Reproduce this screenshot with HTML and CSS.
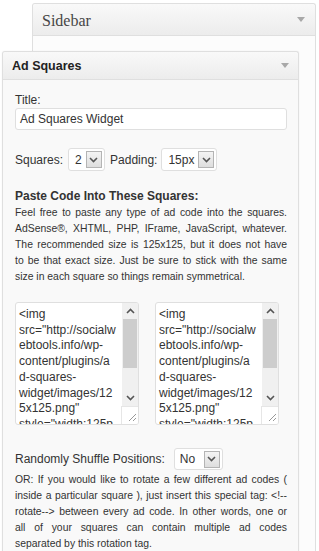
FILE: index.html
```html
<!DOCTYPE html>
<html>
<head>
<meta charset="utf-8">
<link rel="stylesheet" href="styles.css">
</head>
<body>
<div class="sidebar">
  <div class="sb-head"><span class="sb-title">Sidebar</span><span class="tri"></span></div>
  <div class="sb-body">
    <div class="widget">
      <div class="w-head"><span class="w-title">Ad Squares</span><span class="tri"></span></div>
      <div class="w-body">
        <div class="label">Title:</div>
        <div class="input">Ad Squares Widget</div>
        <div class="row row-sq">
          <span>Squares:</span>
          <span class="sel sel-2"><span class="sel-val">2</span><span class="sel-btn"><svg width="9" height="6" viewBox="0 0 9 6"><path d="M1 1 L4.5 4.5 L8 1" fill="none" stroke="#555" stroke-width="1.6"/></svg></span></span>
          <span class="pad-label">Padding:</span>
          <span class="sel sel-15"><span class="sel-val">15px</span><span class="sel-btn"><svg width="9" height="6" viewBox="0 0 9 6"><path d="M1 1 L4.5 4.5 L8 1" fill="none" stroke="#555" stroke-width="1.6"/></svg></span></span>
        </div>
        <div class="heading">Paste Code Into These Squares:</div>
        <div class="desc">
          <span class="jl">Feel free to paste any type of ad code into the squares.</span>
          <span class="jl">AdSense®, XHTML, PHP, IFrame, JavaScript, whatever.</span>
          <span class="jl">The recommended size is 125x125, but it does not have</span>
          <span class="jl">to be that exact size. Just be sure to stick with the same</span>
          <span class="ll">size in each square so things remain symmetrical.</span>
        </div>
        <div class="tas">
          <div class="ta">
            <div class="ta-text">&lt;img
src="http://socialw
ebtools.info/wp-
content/plugins/a
d-squares-
widget/images/12
5x125.png"
style="width:125p</div>
            <div class="ta-bar">
              <div class="sb-arrow"><svg width="9" height="6" viewBox="0 0 9 6"><path d="M1 5 L4.5 1.5 L8 5" fill="none" stroke="#555" stroke-width="1.6"/></svg></div>
              <div class="sb-thumb"></div>
              <div class="sb-track"></div>
              <div class="sb-arrow"><svg width="9" height="6" viewBox="0 0 9 6"><path d="M1 1 L4.5 4.5 L8 1" fill="none" stroke="#555" stroke-width="1.6"/></svg></div>
              <div class="sb-corner"><svg width="16" height="16" viewBox="0 0 16 16"><path d="M14 7 L7 14 M14 11 L11 14" stroke="#999" stroke-width="1"/></svg></div>
            </div>
          </div>
          <div class="ta">
            <div class="ta-text">&lt;img
src="http://socialw
ebtools.info/wp-
content/plugins/a
d-squares-
widget/images/12
5x125.png"
style="width:125p</div>
            <div class="ta-bar">
              <div class="sb-arrow"><svg width="9" height="6" viewBox="0 0 9 6"><path d="M1 5 L4.5 1.5 L8 5" fill="none" stroke="#555" stroke-width="1.6"/></svg></div>
              <div class="sb-thumb"></div>
              <div class="sb-track"></div>
              <div class="sb-arrow"><svg width="9" height="6" viewBox="0 0 9 6"><path d="M1 1 L4.5 4.5 L8 1" fill="none" stroke="#555" stroke-width="1.6"/></svg></div>
              <div class="sb-corner"><svg width="16" height="16" viewBox="0 0 16 16"><path d="M14 7 L7 14 M14 11 L11 14" stroke="#999" stroke-width="1"/></svg></div>
            </div>
          </div>
        </div>
        <div class="row row-shuffle">
          <span>Randomly Shuffle Positions:</span>
          <span class="sel sel-no"><span class="sel-val">No</span><span class="sel-btn"><svg width="9" height="6" viewBox="0 0 9 6"><path d="M1 1 L4.5 4.5 L8 1" fill="none" stroke="#555" stroke-width="1.6"/></svg></span></span>
        </div>
        <div class="desc desc-or">
          <span class="jl">OR: If you would like to rotate a few different ad codes (</span>
          <span class="jl">inside a particular square ), just insert this special tag: &lt;!--</span>
          <span class="jl">rotate--&gt; between every ad code. In other words, one or</span>
          <span class="jl">all of your squares can contain multiple ad codes</span>
          <span class="ll">separated by this rotation tag.</span>
        </div>
      </div>
    </div>
  </div>
</div>
</body>
</html>
```
FILE: styles.css
```css
html, body {
  margin: 0;
  padding: 0;
  background: #fff;
  height: 551px;
  overflow: hidden;
}
body {
  font-family: "Liberation Sans", Arial, sans-serif;
  color: #333;
  font-size: 12px;
}
.sidebar {
  margin: 3px 0 0 32px;
  width: 284px;
  box-sizing: border-box;
  border: 1px solid #dfdfdf;
  border-bottom: none;
  border-radius: 3px 3px 0 0;
  background: #fcfcfc;
  height: 560px;
}
.sb-head {
  height: 31px;
  box-sizing: content-box;
  border-bottom: 1px solid #dfdfdf;
  background: linear-gradient(#f9f9f9, #ececec);
  display: flex;
  align-items: center;
  justify-content: space-between;
  padding: 0 10px 0 9px;
  border-radius: 3px 3px 0 0;
}
.sb-title {
  font-family: "Liberation Serif", "Times New Roman", serif;
  font-size: 16px;
  color: #464646;
  padding-top: 2px;
}
.tri {
  width: 0;
  height: 0;
  border-left: 4px solid transparent;
  border-right: 4px solid transparent;
  border-top: 5px solid #a8a8a8;
}
.sb-body {
  padding-top: 15px;
}
.widget {
  margin-left: -31px;
  width: 297px;
  box-sizing: border-box;
  border: 1px solid #dfdfdf;
  border-bottom: none;
  border-radius: 3px 3px 0 0;
  background: #f9f9f9;
  box-shadow: 0 0 2px rgba(0, 0, 0, 0.06);
  height: 520px;
}
.w-head {
  height: 27px;
  border-bottom: 1px solid #dfdfdf;
  background: linear-gradient(#f9f9f9, #ececec);
  display: flex;
  align-items: center;
  justify-content: space-between;
  padding: 0 9px 0 9px;
  border-radius: 3px 3px 0 0;
}
.w-title {
  font-weight: bold;
  font-size: 12.5px;
  color: #222;
  padding-top: 1px;
}
.w-body {
  padding: 13px 11px 0 12px;
}
.label {
  line-height: 14px;
  height: 14px;
}
.input {
  margin-top: 1px;
  height: 22px;
  box-sizing: border-box;
  border: 1px solid #dfdfdf;
  border-radius: 3px;
  background: #fff;
  padding: 0 4px;
  line-height: 20px;
}
.row {
  display: flex;
  align-items: center;
}
.row-sq {
  margin-top: 18px;
  height: 23px;
}
.sel {
  display: flex;
  align-items: center;
  box-sizing: border-box;
  border: 1px solid #dfdfdf;
  border-radius: 3px;
  background: #fff;
  height: 23px;
  padding: 0 2px 0 0;
}
.sel-2 {
  margin-left: 5px;
  width: 37px;
}
.sel-2 .sel-val {
  padding-left: 6px;
  width: 11px;
}
.pad-label {
  margin-left: 5px;
}
.sel-15 {
  margin-left: 4px;
  width: 56px;
}
.sel-15 .sel-val {
  padding-left: 6px;
  width: 32px;
}
.sel-no {
  margin-left: 9px;
  width: 49px;
  height: 22px;
}
.sel-no .sel-val {
  padding-left: 5px;
  width: 25px;
}
.sel-btn {
  width: 17px;
  height: 17px;
  box-sizing: border-box;
  border: 1px solid #b4b4b4;
  background: linear-gradient(#f4f4f4, #dedede);
  display: flex;
  align-items: center;
  justify-content: center;
  margin-left: auto;
}
.heading {
  margin-top: 18px;
  font-weight: bold;
  font-size: 12px;
  line-height: 15px;
}
.desc {
  margin-top: 1px;
  font-size: 10.4px;
  line-height: 16px;
  color: #333;
}
.jl {
  display: block;
  text-align: justify;
  text-align-last: justify;
}
.ll {
  display: block;
}
.tas {
  margin-top: 17px;
  display: flex;
  gap: 16px;
}
.ta {
  width: 124px;
  height: 123px;
  box-sizing: border-box;
  border: 1px solid #dfdfdf;
  border-radius: 3px;
  background: #fff;
  display: flex;
  overflow: hidden;
}
.ta-text {
  flex: 1;
  padding: 4px 0 0 3px;
  font-size: 12px;
  line-height: 15.7px;
  white-space: pre;
  overflow: hidden;
}
.ta-bar {
  width: 16px;
  display: flex;
  flex-direction: column;
  background: #f0f0f0;
}
.sb-arrow {
  height: 16px;
  display: flex;
  align-items: center;
  justify-content: center;
}
.sb-thumb {
  height: 49px;
  background: #cdcdcd;
  margin: 0 1px;
}
.sb-track {
  flex: 1;
}
.sb-corner {
  height: 17px;
  background: #fff;
  border-left: 1px solid #e6e6e6;
  border-top: 1px solid #e6e6e6;
  margin-left: -1px;
}
.row-shuffle {
  margin-top: 23px;
  height: 22px;
}
.desc-or {
  margin-top: 2px;
}
```
